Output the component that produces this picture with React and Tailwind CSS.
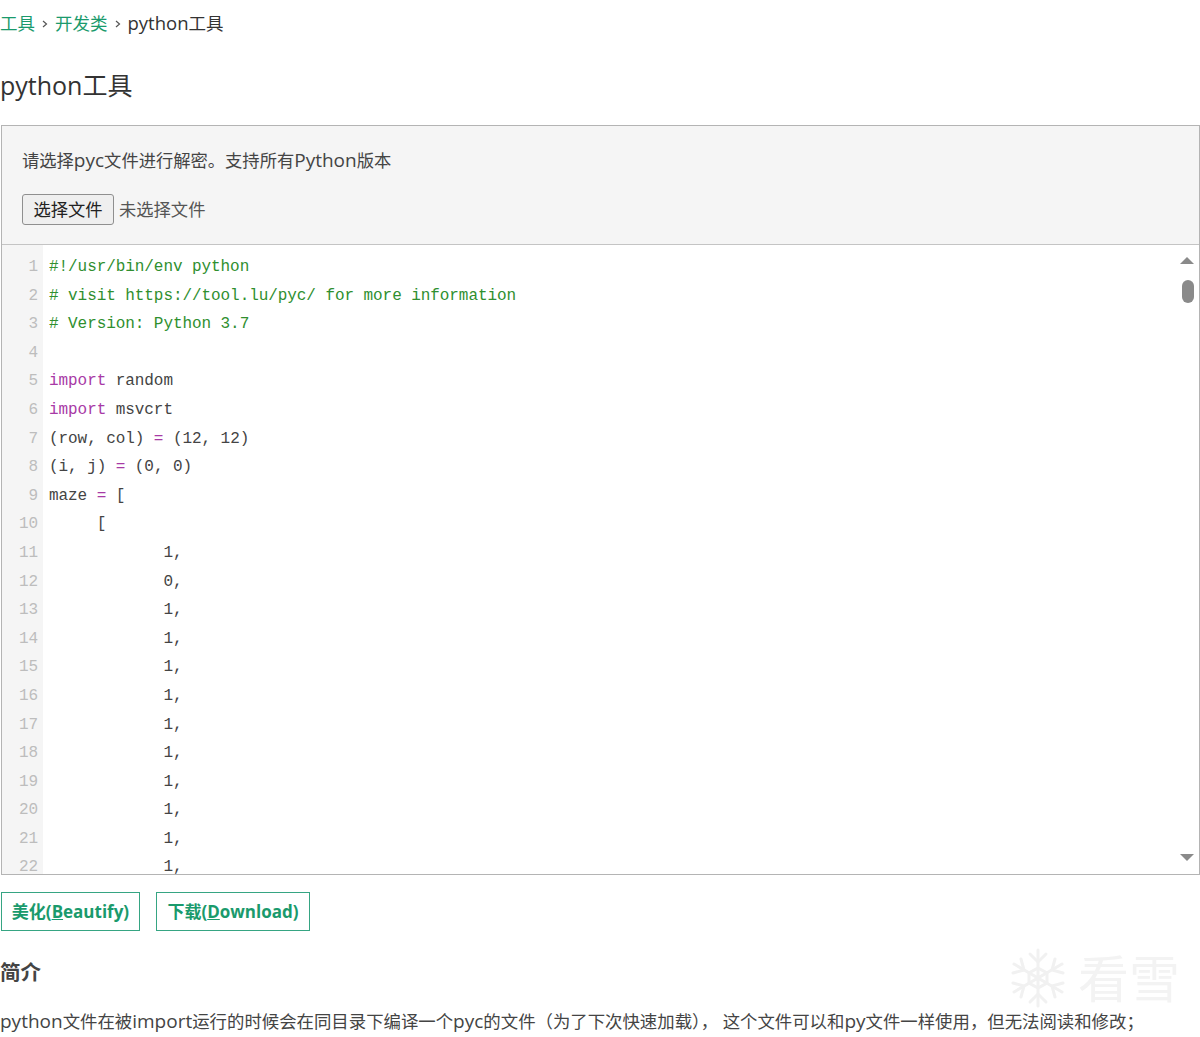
const cjk = "font-['Open_Sans','Noto_Sans_CJK_SC',sans-serif]";

const code = [
  [['c', '#!/usr/bin/env python']],
  [['c', '# visit https://tool.lu/pyc/ for more information']],
  [['c', '# Version: Python 3.7']],
  [],
  [['k', 'import'], ['t', ' random']],
  [['k', 'import'], ['t', ' msvcrt']],
  [['t', '(row, col) '], ['o', '='], ['t', ' (12, 12)']],
  [['t', '(i, j) '], ['o', '='], ['t', ' (0, 0)']],
  [['t', 'maze '], ['o', '='], ['t', ' [']],
  [['t', '     [']],
  [['t', '            1,']],
  [['t', '            0,']],
  ...Array(10).fill([['t', '            1,']]),
];

const tokenColor = {
  c: 'text-[#2f8f2f]',
  k: 'text-[#a83aa6]',
  o: 'text-[#a83aa6]',
  t: 'text-[#444444]',
};

function Snowflake() {
  return (
    <svg width="60" height="60" viewBox="0 0 60 60" fill="none" stroke="#f1f1f1" strokeWidth="3" strokeLinecap="round">
      <path d="M30 2V58M6 16L54 44M54 16L6 44" />
      <path d="M22 6L30 14L38 6M22 54L30 46L38 54" />
      <path d="M5 25L16 22L13 11M55 35L44 38L47 49M55 25L44 22L47 11M5 35L16 38L13 49" />
      <path d="M30 20L39 25V35L30 40L21 35V25Z" />
    </svg>
  );
}

function Chevron() {
  return (
    <svg className="mx-[7px] mt-px" width="6" height="8" viewBox="0 0 6 8" fill="none" stroke="#555555" strokeWidth="1.2">
      <path d="M1 1L4.5 4L1 7" />
    </svg>
  );
}

// latin runs sit a bit larger than the cjk around them
function L({ children }) {
  return <span className="text-[19px]">{children}</span>;
}

export default function App() {
  return (
    <div className={`${cjk} relative h-[1037px] overflow-hidden bg-white text-[#333333]`}>
      {/* Breadcrumb */}
      <div className="flex items-center h-[22px] mt-3 text-[17.5px] leading-[22px]">
        <span className="text-[#1a9a6c]">工具</span>
        <Chevron />
        <span className="text-[#1a9a6c]">开发类</span>
        <Chevron />
        <span><span className="text-[18.5px]">python</span>工具</span>
      </div>

      <h1 className="mt-[34px] h-[34px] text-[25px] leading-[34px] font-normal">python工具</h1>

      {/* Tool panel */}
      <div className="mt-[23px] ml-px border border-[#b4b4b4]">
        <div className="h-[119px] bg-[#f5f5f5] border-b border-[#c4c4c4] pl-5 pt-[22px]">
          <p className="h-6 text-[17.3px] leading-6 text-[#444444]">请选择<L>pyc</L>文件进行解密。支持所有<L>Python</L>版本</p>
          <div className="flex items-center mt-[22px]">
            <button className="w-[92px] h-[31px] border border-[#8f8f8f] rounded-[3px] bg-[#efefef] text-[17.3px] leading-none text-[#222222]">选择文件</button>
            <span className="ml-[5px] text-[17.3px] text-[#555555]">未选择文件</span>
          </div>
        </div>

        <div className="relative flex h-[629px] overflow-hidden bg-white font-['Liberation_Mono','Noto_Sans_CJK_SC',monospace] text-[16px] leading-[28.6px]">
          <div className="w-[41px] shrink-0 bg-[#f5f5f5] pt-[8px] pr-[5px] text-right text-[#bdbdbd] tracking-[-0.07px]">
            {code.map((_, i) => (
              <div key={i} className="h-[28.6px]">{i + 1}</div>
            ))}
          </div>
          <div className="pl-[6px] pt-[8px] tracking-[-0.07px] whitespace-pre">
            {code.map((line, i) => (
              <div key={i} className="h-[28.6px]">
                {line.map(([type, text], j) => (
                  <span key={j} className={tokenColor[type]}>{text}</span>
                ))}
              </div>
            ))}
          </div>

          {/* Scrollbar */}
          <div className="absolute right-0 top-0 bottom-0 w-[22px]">
            <div className="absolute left-[3px] top-[12px] w-0 h-0 border-x-[7px] border-x-transparent border-b-[7px] border-b-[#8a8a8a]" />
            <div className="absolute left-[5px] top-[35px] w-3 h-[23px] rounded-md bg-[#8a8a8a]" />
            <div className="absolute left-[3px] bottom-[13px] w-0 h-0 border-x-[7px] border-x-transparent border-t-[7px] border-t-[#8a8a8a]" />
          </div>
        </div>
      </div>

      {/* Actions */}
      <div className="flex gap-4 mt-[17px] ml-px">
        <button className="h-[39px] w-[139px] border border-[#36a583] text-[17px] font-bold text-[#1a9a6c]">
          美化(<u>B</u>eautify)
        </button>
        <button className="h-[39px] w-[154px] border border-[#36a583] text-[17px] font-bold text-[#1a9a6c]">
          下载(<u>D</u>ownload)
        </button>
      </div>

      <h2 className="mt-[27px] h-[28px] text-[20.5px] leading-[28px] font-bold text-[#444444]">简介</h2>

      <p className="mt-[23px] h-6 text-[17.4px] leading-6 text-[#444444] whitespace-nowrap">
        <L>python</L>文件在被<L>import</L>运行的时候会在同目录下编译一个<L>pyc</L>的文件（为了下次快速加载）， 这个文件可以和<L>py</L>文件一样使用，但无法阅读和修改；
      </p>

      {/* Watermark */}
      <div className="absolute left-[1008px] top-[948px] flex items-center gap-[10px]">
        <Snowflake />
        <span className="text-[51px] leading-[60px] text-[#f3f3f3]">看雪</span>
      </div>
    </div>
  );
}
